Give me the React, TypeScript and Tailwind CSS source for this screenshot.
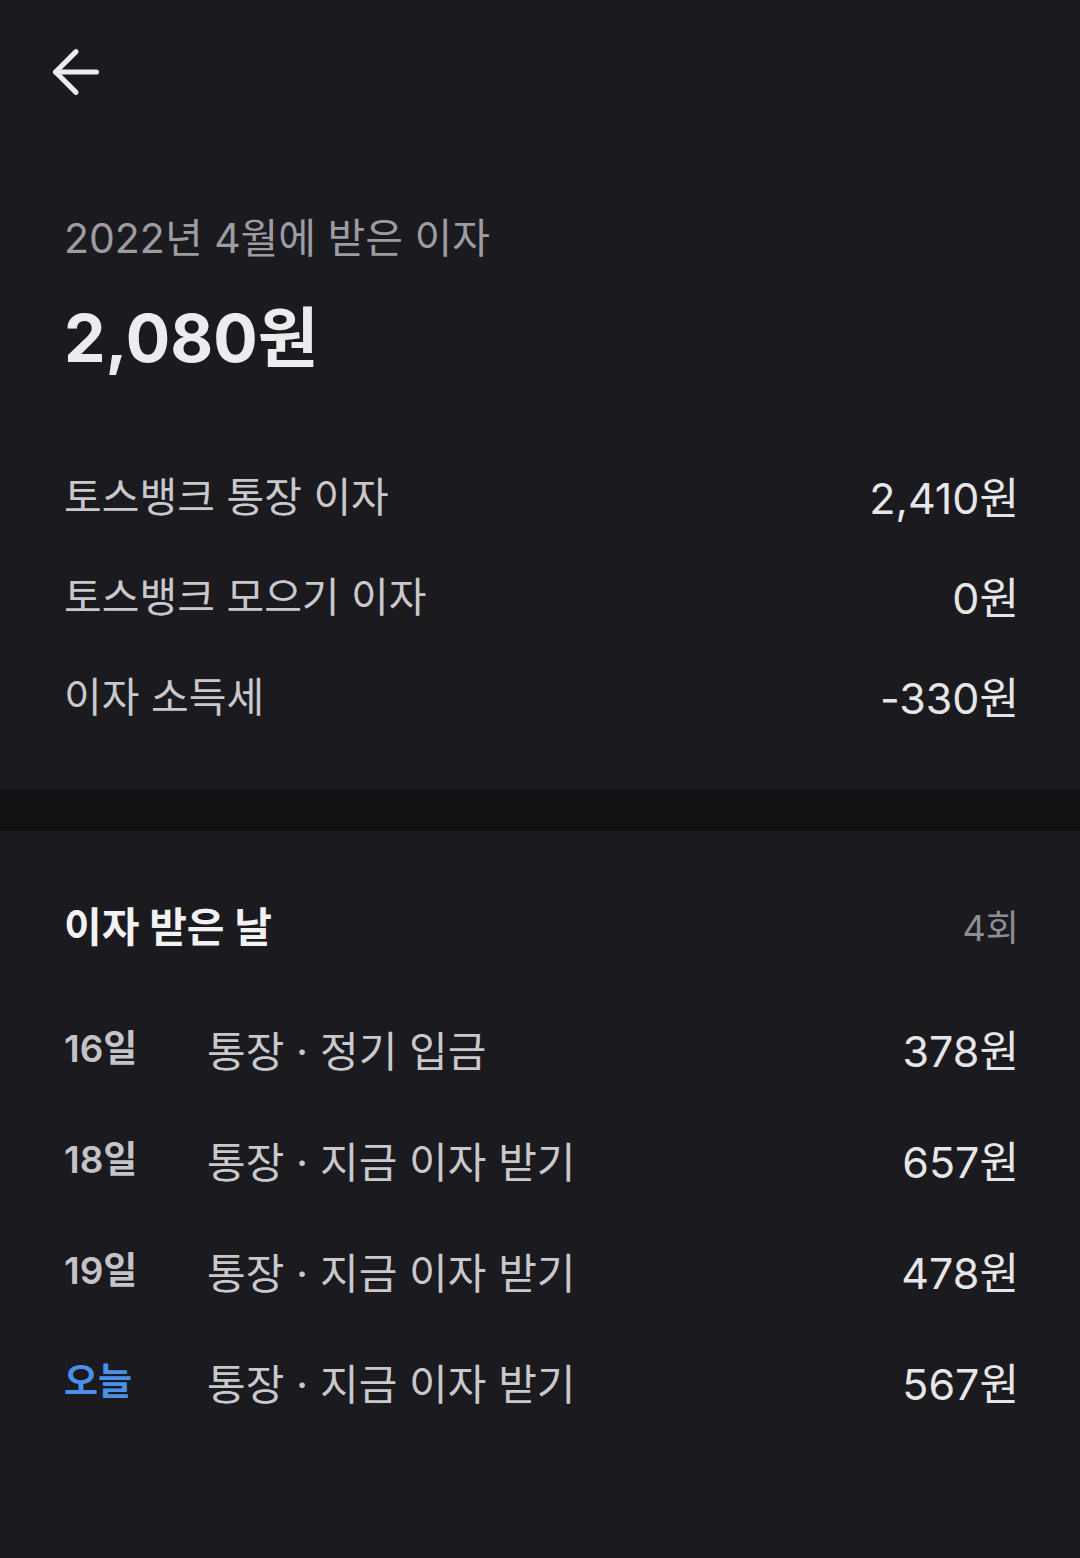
import { ArrowLeft } from 'lucide-react';

const summary = [
  { label: '토스뱅크 통장 이자', value: '2,410원' },
  { label: '토스뱅크 모으기 이자', value: '0원' },
  { label: '이자 소득세', value: '-330원' },
];

const days = [
  { day: '16일', desc: '통장 · 정기 입금', amount: '378원', today: false },
  { day: '18일', desc: '통장 · 지금 이자 받기', amount: '657원', today: false },
  { day: '19일', desc: '통장 · 지금 이자 받기', amount: '478원', today: false },
  { day: '오늘', desc: '통장 · 지금 이자 받기', amount: '567원', today: true },
];

export default function App() {
  return (
    <div
      className="w-[1080px] h-[1558px] bg-[#1b1a1f] flex flex-col"
      style={{ fontFamily: 'Inter, "Noto Sans CJK KR", sans-serif' }}
    >
      {/* Top section */}
      <div className="flex flex-col">
        <div className="h-[144px] flex items-center pl-[41px]">
          <ArrowLeft size={70} strokeWidth={1.75} color="#ececee" />
        </div>

        <div className="pl-[64px] pr-[61px] flex flex-col">
          <div className="mt-[68px] h-[52px] leading-[52px] text-[41px] text-[#9d9ca2]">
            2022년 4월에 받은 이자
          </div>
          <div className="mt-[34px] h-[80px] leading-[80px] text-[66px] font-bold text-[#ececee]">
            2,080원
          </div>

          <div className="mt-[70px] flex flex-col pb-[42px]">
            {summary.map((row) => (
              <div key={row.label} className="h-[100px] flex items-center justify-between">
                <span className="text-[41px] text-[#c9c9cd]">{row.label}</span>
                <span className="text-[43px] text-[#e6e6e8]">{row.value}</span>
              </div>
            ))}
          </div>
        </div>
      </div>

      {/* Divider band */}
      <div className="h-[41px] bg-[#111113]" />

      {/* Interest days */}
      <div className="pl-[64px] pr-[61px] flex flex-col">
        <div className="mt-[67px] h-[60px] flex items-center justify-between">
          <span className="text-[41px] font-bold text-[#f2f2f4]">이자 받은 날</span>
          <span className="text-[36px] text-[#8e8d93]">4회</span>
        </div>

        <div className="mt-[38px] flex flex-col">
          {days.map((d) => (
            <div key={d.day} className="h-[111px] flex items-center">
              <span
                className={
                  'w-[143px] text-[37px] font-semibold -mt-[6px] ' +
                  (d.today ? 'text-[#4a8fe8]' : 'text-[#c4c4c8]')
                }
              >
                {d.day}
              </span>
              <span className="flex-1 text-[42px] text-[#c9c9cd]">{d.desc}</span>
              <span className="text-[43px] text-[#e6e6e8]">{d.amount}</span>
            </div>
          ))}
        </div>
      </div>
    </div>
  );
}
